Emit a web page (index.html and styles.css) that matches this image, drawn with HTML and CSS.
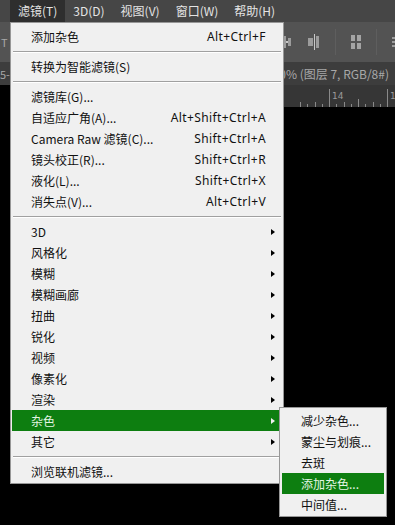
FILE: index.html
```html
<!DOCTYPE html>
<html lang="zh-CN">
<head>
    <meta charset="UTF-8">
    <title>滤镜菜单</title>
    <link rel="stylesheet" href="styles.css">
</head>
<body>
    <div class="app">
        <div class="menubar">
            <span class="menubar-item open">滤镜(T)</span>
            <span class="menubar-item">3D(D)</span>
            <span class="menubar-item">视图(V)</span>
            <span class="menubar-item">窗口(W)</span>
            <span class="menubar-item">帮助(H)</span>
        </div>

        <div class="optbar">
            <span class="opt-edge">T</span>
            <div class="opt-tools">
                <svg class="tool" width="12" height="20" viewBox="0 0 12 20"><rect x="2" y="4" width="3" height="12" fill="#9c9c9c"/><rect x="7" y="6" width="3" height="8" fill="#9c9c9c"/><rect x="5" y="9" width="2" height="2" fill="#c8c8c8"/></svg>
                <svg class="tool" width="14" height="20" viewBox="0 0 14 20"><rect x="1" y="6" width="5" height="8" fill="#9c9c9c"/><rect x="7" y="2" width="1" height="16" fill="#c8c8c8"/><rect x="9" y="4" width="3" height="12" fill="#9c9c9c"/></svg>
                <span class="opt-sep"></span>
                <svg class="tool" width="12" height="20" viewBox="0 0 12 20"><rect x="1" y="3" width="4" height="6" fill="#a4a4a4"/><rect x="7" y="3" width="4" height="6" fill="#a4a4a4"/><rect x="1" y="11" width="4" height="6" fill="#a4a4a4"/><rect x="7" y="11" width="4" height="6" fill="#a4a4a4"/></svg>
                <span class="opt-sep"></span>
                <svg class="tool" width="8" height="20" viewBox="0 0 8 20"><rect x="1" y="5" width="6" height="2" fill="#9c9c9c"/><rect x="1" y="9" width="6" height="2" fill="#9c9c9c"/><rect x="1" y="13" width="6" height="2" fill="#9c9c9c"/></svg>
            </div>
        </div>

        <div class="docbar">
            <span class="doc-edge">5-</span>
            <span class="doc-title">0% (图层 7, RGB/8#)</span>
        </div>

        <div class="ruler">
            <svg class="ruler-marks" width="385" height="22" viewBox="0 0 385 22">
                <g stroke="#8a8a8a" stroke-width="1">
                    <line x1="319.5" y1="4" x2="319.5" y2="22"/>
                    <line x1="377.5" y1="4" x2="377.5" y2="22"/>
                    <line x1="290.5" y1="17" x2="290.5" y2="22"/>
                    <line x1="297.5" y1="19" x2="297.5" y2="22"/>
                    <line x1="305.5" y1="17" x2="305.5" y2="22"/>
                    <line x1="312.5" y1="19" x2="312.5" y2="22"/>
                    <line x1="326.5" y1="19" x2="326.5" y2="22"/>
                    <line x1="334.5" y1="17" x2="334.5" y2="22"/>
                    <line x1="341.5" y1="19" x2="341.5" y2="22"/>
                    <line x1="348.5" y1="14" x2="348.5" y2="22"/>
                    <line x1="355.5" y1="19" x2="355.5" y2="22"/>
                    <line x1="363.5" y1="17" x2="363.5" y2="22"/>
                    <line x1="370.5" y1="19" x2="370.5" y2="22"/>
                </g>
                <text x="322" y="14" fill="#9a9a9a" font-size="9" font-family="DejaVu Sans, sans-serif">14</text>
                <text x="380" y="14" fill="#9a9a9a" font-size="9" font-family="DejaVu Sans, sans-serif">1</text>
            </svg>
        </div>

        <div class="canvas"></div>

        <div class="menu">
            <div class="item"><span class="label">添加杂色</span><span class="shortcut">Alt+Ctrl+F</span><span class="slot"></span></div>
            <div class="sep"></div>
            <div class="item"><span class="label">转换为智能滤镜(S)</span><span class="slot"></span></div>
            <div class="sep"></div>
            <div class="item"><span class="label">滤镜库(G)...</span><span class="slot"></span></div>
            <div class="item"><span class="label">自适应广角(A)...</span><span class="shortcut">Alt+Shift+Ctrl+A</span><span class="slot"></span></div>
            <div class="item"><span class="label">Camera Raw 滤镜(C)...</span><span class="shortcut">Shift+Ctrl+A</span><span class="slot"></span></div>
            <div class="item"><span class="label">镜头校正(R)...</span><span class="shortcut">Shift+Ctrl+R</span><span class="slot"></span></div>
            <div class="item"><span class="label">液化(L)...</span><span class="shortcut">Shift+Ctrl+X</span><span class="slot"></span></div>
            <div class="item"><span class="label">消失点(V)...</span><span class="shortcut">Alt+Ctrl+V</span><span class="slot"></span></div>
            <div class="sep"></div>
            <div class="item"><span class="label">3D</span><span class="slot"><i class="arrow"></i></span></div>
            <div class="item"><span class="label">风格化</span><span class="slot"><i class="arrow"></i></span></div>
            <div class="item"><span class="label">模糊</span><span class="slot"><i class="arrow"></i></span></div>
            <div class="item"><span class="label">模糊画廊</span><span class="slot"><i class="arrow"></i></span></div>
            <div class="item"><span class="label">扭曲</span><span class="slot"><i class="arrow"></i></span></div>
            <div class="item"><span class="label">锐化</span><span class="slot"><i class="arrow"></i></span></div>
            <div class="item"><span class="label">视频</span><span class="slot"><i class="arrow"></i></span></div>
            <div class="item"><span class="label">像素化</span><span class="slot"><i class="arrow"></i></span></div>
            <div class="item"><span class="label">渲染</span><span class="slot"><i class="arrow"></i></span></div>
            <div class="item active"><span class="label">杂色</span><span class="slot"><i class="arrow"></i></span></div>
            <div class="item"><span class="label">其它</span><span class="slot"><i class="arrow"></i></span></div>
            <div class="sep"></div>
            <div class="item"><span class="label">浏览联机滤镜...</span><span class="slot"></span></div>
        </div>

        <div class="menu submenu">
            <div class="item"><span class="label">减少杂色...</span></div>
            <div class="item"><span class="label">蒙尘与划痕...</span></div>
            <div class="item"><span class="label">去斑</span></div>
            <div class="item active"><span class="label">添加杂色...</span></div>
            <div class="item"><span class="label">中间值...</span></div>
        </div>
    </div>
</body>
</html>
```

FILE: styles.css
```css
* {
    margin: 0;
    padding: 0;
    box-sizing: border-box;
}

body {
    background: #000;
    font-family: "Noto Sans CJK SC", "Noto Sans", sans-serif;
    font-size: 12px;
    overflow: hidden;
}

.app {
    position: relative;
    width: 395px;
    height: 525px;
}

/* app chrome behind the menu */
.menubar {
    height: 22px;
    background: #464646;
    display: flex;
    padding-left: 10px;
}

.menubar-item {
    color: #e4e4e4;
    line-height: 22px;
    padding: 0 8px;
}

.menubar-item.open {
    background: #2e2e2e;
}

.optbar {
    height: 40px;
    background: #535353;
    display: flex;
    align-items: center;
    justify-content: space-between;
}

.opt-edge {
    color: #a8a8a8;
    font-size: 11px;
    padding-left: 1px;
}

.opt-tools {
    display: flex;
    align-items: center;
    gap: 14px;
    margin-right: -4px;
}

.tool {
    display: block;
}

.opt-sep {
    width: 1px;
    height: 26px;
    background: #444;
    border-right: 1px solid #5e5e5e;
}

.docbar {
    height: 23px;
    background: #3d3d3d;
    display: flex;
    align-items: center;
    justify-content: space-between;
    color: #a8a8a8;
}

.doc-edge {
    font-size: 11px;
}

.doc-title {
    padding-right: 6px;
    white-space: nowrap;
}

.ruler {
    height: 22px;
    margin-left: 10px;
    background: #363636;
}

.ruler-marks {
    display: block;
}

.canvas {
    height: 418px;
    background: #000;
}

/* dropdown menus */
.menu {
    position: absolute;
    left: 10px;
    top: 22px;
    width: 274px;
    background: #f0f0f0;
    border: 1px solid #979797;
    padding: 3px 0 1px;
    color: #111;
}

.item {
    height: 21px;
    display: flex;
    align-items: center;
    margin: 0 2px 0 1px;
    padding-left: 19px;
    white-space: nowrap;
}

.label {
    flex: 1;
}

.shortcut {
    font-family: "Noto Sans", sans-serif;
    font-size: 12px;
    letter-spacing: 0.4px;
}

.slot {
    width: 15px;
    display: flex;
    align-items: center;
    padding-left: 5px;
}

.arrow {
    width: 0;
    height: 0;
    border-left: 4px solid #000;
    border-top: 3.5px solid transparent;
    border-bottom: 3.5px solid transparent;
}

.item.active {
    background: #0d7e10;
    color: #e4f5e4;
}

.item.active .arrow {
    border-left-color: #f0f0f0;
}

.sep {
    margin: 4px 2px 3px;
    border-top: 1px solid #a0a0a0;
    border-bottom: 1px solid #fff;
}

.submenu {
    left: 279px;
    top: 407px;
    width: 108px;
    padding: 2px 0 1px;
}

.submenu .item {
    margin: 0 2px;
    padding-left: 19px;
}
```
